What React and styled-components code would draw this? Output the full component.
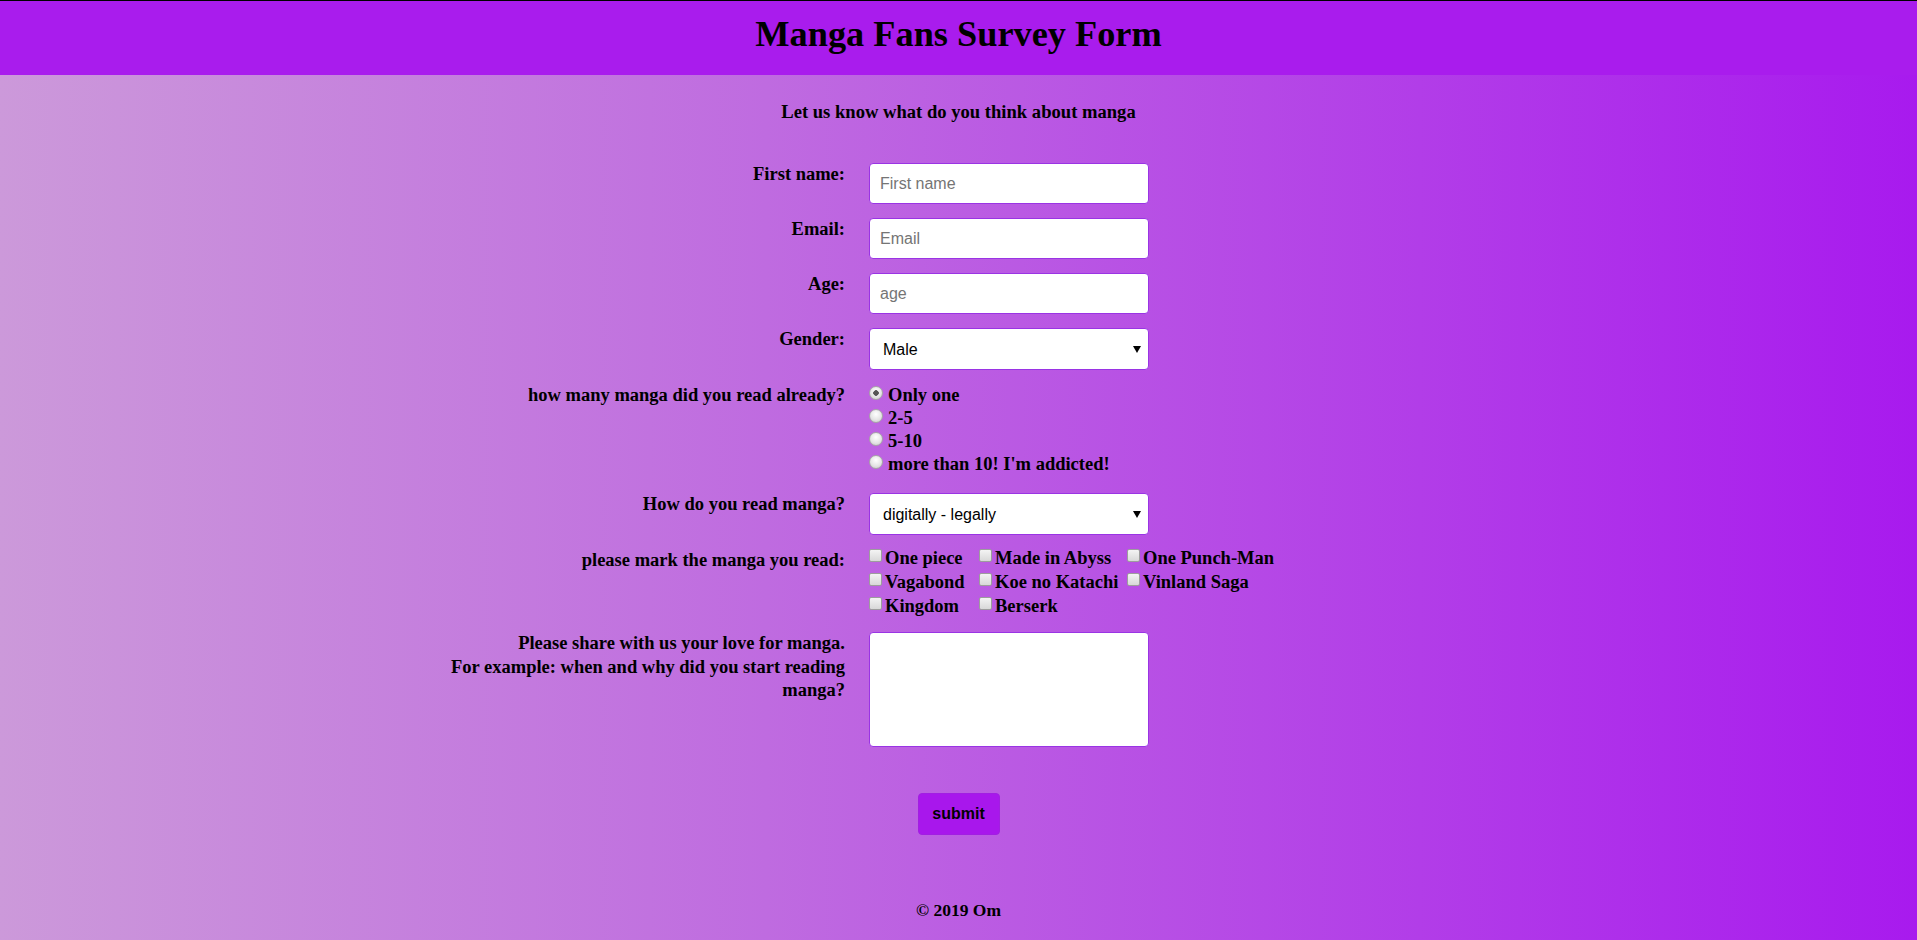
import React from "react";
import styled, { createGlobalStyle } from "styled-components";

const GlobalStyle = createGlobalStyle`
  html, body { margin: 0; padding: 0; }
  body {
    font-family: "Liberation Serif", "Times New Roman", serif;
    font-weight: bold;
    color: #000;
  }
  * { box-sizing: border-box; }
`;

const Page = styled.div`
  min-height: 100vh;
  background: linear-gradient(to right, #cc99da 0%, #bf6be0 40%, #a81aee 100%);
  display: flex;
  flex-direction: column;
`;

const Header = styled.header`
  height: 75px;
  border-top: 1px solid #000;
  background: #a91ced;
  display: flex;
  justify-content: center;
  align-items: flex-start;
  padding-top: 13px;
`;

const Title = styled.h1`
  margin: 0;
  font-size: 36.3px;
  line-height: 41px;
  font-weight: bold;
`;

const Intro = styled.p`
  margin: 26px 0 0;
  text-align: center;
  font-size: 18.6px;
  line-height: 21px;
`;

const Form = styled.form`
  margin-top: 41px;
  display: grid;
  grid-template-columns: 44.08% 1fr;
  column-gap: 24px;
  row-gap: 14px;
  align-items: start;
`;

const Label = styled.label`
  justify-self: end;
  max-width: 410px;
  text-align: right;
  font-size: 18.5px;
  line-height: ${(p) => p.$lh || "23px"};
`;

const fieldBase = `
  width: 280px;
  border: 1px solid #9a34e4;
  border-radius: 4px;
  background: #fff;
  font-family: "Liberation Sans", Arial, sans-serif;
  font-size: 16px;
  color: #000;
  outline: none;
`;

const TextInput = styled.input`
  ${fieldBase}
  height: 41px;
  padding: 0 10px;
  &::placeholder { color: #757575; }
`;

const SelectWrap = styled.div`
  position: relative;
  width: 280px;
`;

const Select = styled.select`
  ${fieldBase}
  height: 42px;
  padding: 0 28px 0 13px;
  appearance: none;
  -webkit-appearance: none;
`;

const Arrow = styled.svg`
  position: absolute;
  right: 8px;
  top: 17px;
  pointer-events: none;
`;

const RadioGroup = styled.div`
  display: flex;
  flex-direction: column;
  padding-bottom: 3px;
`;

const OptionLine = styled.label`
  font-size: 18.5px;
  line-height: 23px;
  white-space: nowrap;
`;

const Radio = styled.input.attrs({ type: "radio" })`
  appearance: none;
  -webkit-appearance: none;
  display: inline-block;
  width: 14px;
  height: 14px;
  margin: 0 5px 1px 0;
  vertical-align: baseline;
  border-radius: 50%;
  border: 1px solid #a7a7a7;
  background: radial-gradient(circle at 50% 35%, #ffffff 0%, #e6e6e6 55%, #c9c9c9 100%);
  &:checked {
    background:
      radial-gradient(circle at 50% 50%, #555 0, #555 2.5px, transparent 3px),
      radial-gradient(circle at 50% 35%, #ffffff 0%, #e6e6e6 55%, #c9c9c9 100%);
  }
`;

const CheckGrid = styled.div`
  display: grid;
  grid-template-columns: 110px 148px auto;
  margin-top: -3px;
`;

const Checkbox = styled.input.attrs({ type: "checkbox" })`
  appearance: none;
  -webkit-appearance: none;
  display: inline-block;
  width: 13px;
  height: 13px;
  margin: 0 3px 2px 0;
  vertical-align: baseline;
  border: 1px solid #9d9d9d;
  border-radius: 2px;
  background: linear-gradient(#f4f4f4, #d8d8d8);
`;

const CheckLine = styled.label`
  font-size: 18.5px;
  line-height: 24px;
  white-space: nowrap;
`;

const TextArea = styled.textarea`
  ${fieldBase}
  height: 115px;
  resize: none;
  padding: 4px 8px;
`;

const SubmitRow = styled.div`
  display: flex;
  justify-content: center;
  margin-top: 46px;
`;

const SubmitButton = styled.button`
  width: 82px;
  height: 42px;
  border: 1px solid #a21ee2;
  border-radius: 4px;
  background: #a817ec;
  font-family: "Liberation Sans", Arial, sans-serif;
  font-weight: bold;
  font-size: 16px;
  color: #000;
  padding: 0;
  cursor: pointer;
`;

const Footer = styled.footer`
  margin-top: 65px;
  text-align: center;
  font-size: 17.5px;
  line-height: 20px;
`;

const arrow = (
  <Arrow width="8" height="8" viewBox="0 0 8 8">
    <path d="M0 1 L8 1 L4 8 Z" fill="#000" />
  </Arrow>
);

const radios = ["Only one", "2-5", "5-10", "more than 10! I'm addicted!"];
const mangas = [
  "One piece",
  "Made in Abyss",
  "One Punch-Man",
  "Vagabond",
  "Koe no Katachi",
  "Vinland Saga",
  "Kingdom",
  "Berserk",
];

export default function App() {
  return (
    <>
      <GlobalStyle />
      <Page>
        <Header>
          <Title>Manga Fans Survey Form</Title>
        </Header>
        <Intro>Let us know what do you think about manga</Intro>
        <Form onSubmit={(e) => e.preventDefault()}>
          <Label htmlFor="name">First name:</Label>
          <TextInput id="name" placeholder="First name" />

          <Label htmlFor="email">Email:</Label>
          <TextInput id="email" placeholder="Email" />

          <Label htmlFor="age">Age:</Label>
          <TextInput id="age" placeholder="age" />

          <Label htmlFor="gender">Gender:</Label>
          <SelectWrap>
            <Select id="gender" defaultValue="male">
              <option value="male">Male</option>
              <option value="female">Female</option>
            </Select>
            {arrow}
          </SelectWrap>

          <Label>how many manga did you read already?</Label>
          <RadioGroup>
            {radios.map((r, i) => (
              <OptionLine key={r}>
                <Radio name="count" defaultChecked={i === 0} />
                {r}
              </OptionLine>
            ))}
          </RadioGroup>

          <Label htmlFor="how">How do you read manga?</Label>
          <SelectWrap>
            <Select id="how" defaultValue="legal">
              <option value="legal">digitally - legally</option>
              <option value="paper">paper</option>
            </Select>
            {arrow}
          </SelectWrap>

          <Label>please mark the manga you read:</Label>
          <CheckGrid>
            {mangas.map((m) => (
              <CheckLine key={m}>
                <Checkbox />
                {m}
              </CheckLine>
            ))}
          </CheckGrid>

          <Label $lh="23.5px" htmlFor="love">
            Please share with us your love for manga.
            <br />
            For example: when and why did you start reading manga?
          </Label>
          <TextArea id="love" />
        </Form>
        <SubmitRow>
          <SubmitButton type="button">submit</SubmitButton>
        </SubmitRow>
        <Footer>© 2019 Om</Footer>
      </Page>
    </>
  );
}
